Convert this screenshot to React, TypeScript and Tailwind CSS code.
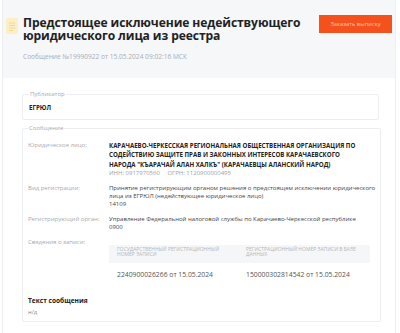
const rows = [
  { label: "Вид регистрации:", lines: ["Принятие регистрирующим органом решения о предстоящем исключении юридического", "лица из ЕГРЮЛ (недействующее юридическое лицо)", "14109"] },
  { label: "Регистрирующий орган:", lines: ["Управление Федеральной налоговой службы по Карачаево-Черкесской республике", "0900"] },
];

function DocIcon() {
  return (
    <svg width="12" height="16" viewBox="0 0 12 16" className="mt-[1px] shrink-0">
      <rect x="0" y="0" width="12" height="16" rx="2" fill="#fcefc6" />
      <path d="M3 5h6M3 7.5h6M3 10h6M3 12.5h4" stroke="#f1d98f" strokeWidth="1" />
    </svg>
  );
}

export default function App() {
  return (
    <div className="w-[400px] h-[333px] bg-white overflow-hidden font-['Open_Sans',sans-serif]">
      <div className="ml-[2px] w-[394px] h-full border-x border-[#eceef1]">
        {/* Header */}
        <header className="bg-[#f6f7f9] h-[78px] pt-[17px] pl-[3px] pr-[3px]">
          <div className="flex items-start">
            <DocIcon />
            <h1 className="ml-[5px] w-[290px] text-[12.1px] leading-[12.5px] font-bold text-[#222] tracking-[-0.1px]">
              Предстоящее исключение недействующего юридического лица из реестра
            </h1>
            <button className="ml-auto mt-[-2px] w-[73px] h-[18px] bg-[#f5511d] text-[#ffc2a8] text-[5.8px] leading-[18px] text-center">
              Заказать выписку
            </button>
          </div>
          <p className="ml-[17px] mt-[12px] text-[6.6px] leading-[6px] text-[#a9adb4]">
            Сообщение №19990922 от 15.05.2024 09:02:16 МСК
          </p>
        </header>

        {/* Body */}
        <div className="pl-[19px] pr-[16px]">
          <fieldset className="mt-[13px] border border-[#eceef1] rounded-[2px] px-[6px] pb-[8.5px]">
            <legend className="px-[1px] text-[6px] leading-[6px] text-[#a6aab1]">Публикатор</legend>
            <div className="pt-[6.5px] text-[6.2px] leading-[7px] font-bold text-[#222]">ЕГРЮЛ</div>
          </fieldset>

          <fieldset className="mt-[5px] border border-[#eceef1] rounded-[2px] px-[5px] pb-[4.5px]">
            <legend className="px-[1px] text-[6px] leading-[6px] text-[#a6aab1]">Сообщение</legend>

            <div className="pt-[10px] grid grid-cols-[81px_1fr] gap-y-[7px] text-[6px]">
              <div className="leading-[9.3px] text-[#a6aab1]">Юридическое лицо:</div>
              <div>
                <div className="leading-[9.3px] font-bold text-[#222] text-[6.15px] whitespace-nowrap">
                  КАРАЧАЕВО-ЧЕРКЕССКАЯ РЕГИОНАЛЬНАЯ ОБЩЕСТВЕННАЯ ОРГАНИЗАЦИЯ ПО
                  <br />
                  СОДЕЙСТВИЮ ЗАЩИТЕ ПРАВ И ЗАКОННЫХ ИНТЕРЕСОВ КАРАЧАЕВСКОГО
                  <br />
                  НАРОДА "КЪАРАЧАЙ АЛАН ХАЛКЪ" (КАРАЧАЕВЦЫ АЛАНСКИЙ НАРОД)
                </div>
                <div className="mt-[1px] leading-[7px] text-[#9da1a8]">
                  ИНН: 0917970560 <span className="ml-[6px]">ОГРН: 1120900000495</span>
                </div>
              </div>

              {rows.map((r) => (
                <div key={r.label} className="contents">
                  <div className="leading-[8px] text-[#a6aab1] whitespace-nowrap">{r.label}</div>
                  <div className="leading-[8px] text-[#444] text-[6px] whitespace-nowrap">
                    {r.lines.map((l) => (
                      <div key={l}>{l}</div>
                    ))}
                  </div>
                </div>
              ))}

              <div className="leading-[8px] text-[#a6aab1]">Сведения о записи:</div>
              <div className="pt-[7px] pr-[5px]">
                <div className="grid grid-cols-[129px_1fr] bg-[#f5f6f8] pt-[2.5px] pb-[6.5px] pl-[8px] text-[5px] leading-[4.8px] text-[#b2b6bc] uppercase">
                  <div>Государственный регистрационный<br />номер записи</div>
                  <div>Регистрационный номер записи в базе<br />данных</div>
                </div>
                <div className="mt-[8px] grid grid-cols-[129px_1fr] pl-[8px] text-[6.8px] leading-[7px] text-[#555]">
                  <div>2240900026266 от 15.05.2024</div>
                  <div>150000302814542 от 15.05.2024</div>
                </div>
              </div>
            </div>

            <div className="mt-[19px] text-[6.6px] leading-[8px] font-bold text-[#222]">Текст сообщения</div>
            <div className="mt-[4px] text-[5.8px] leading-[7px] text-[#888]">н/д</div>
          </fieldset>
        </div>
      </div>
    </div>
  );
}
